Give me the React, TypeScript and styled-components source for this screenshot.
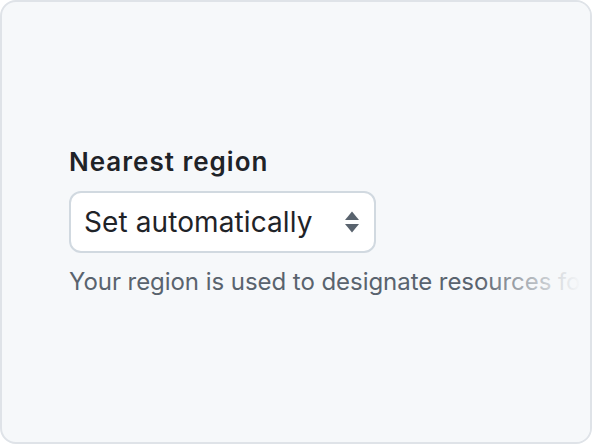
import React from "react";
import styled, { createGlobalStyle } from "styled-components";

const Global = createGlobalStyle`
  html, body { margin: 0; padding: 0; background: #ffffff; }
  * { box-sizing: border-box; }
`;

const Card = styled.div`
  position: relative;
  width: 592px;
  height: 444px;
  border: 2px solid #dfe3e8;
  border-radius: 16px;
  background: #f6f8fa;
  overflow: hidden;
  display: flex;
  flex-direction: column;
  justify-content: center;
  padding: 0 0 0 67px;
  font-family: Inter, "Noto Sans", sans-serif;
`;

const Field = styled.div`
  display: flex;
  flex-direction: column;
  align-items: flex-start;
`;

const Label = styled.div`
  font-size: 26px;
  font-weight: 600;
  color: #1f2328;
  line-height: 32px;
  margin-bottom: 13px;
  letter-spacing: 1px;
`;

const Select = styled.div`
  width: 307px;
  height: 62px;
  background: #ffffff;
  border: 2px solid #d1d9e0;
  border-radius: 12px;
  display: flex;
  align-items: center;
  justify-content: space-between;
  padding: 0 14px 0 13px;
`;

const SelectText = styled.span`
  font-size: 28px;
  color: #1f2328;
  letter-spacing: 0.1px;
`;

const Helper = styled.div`
  margin-top: 13px;
  font-size: 24px;
  line-height: 32px;
  color: #59636e;
  white-space: nowrap;
  letter-spacing: -0.05px;
`;

const Fade = styled.div`
  position: absolute;
  top: 0;
  right: 0;
  bottom: 0;
  width: 110px;
  background: linear-gradient(
    to right,
    rgba(246, 248, 250, 0) 0%,
    rgba(246, 248, 250, 0.45) 35%,
    rgba(246, 248, 250, 0.85) 75%,
    rgba(246, 248, 250, 1) 92%
  );
  pointer-events: none;
`;

const Arrows = () => (
  <svg width="16" height="24" viewBox="0 0 16 24" fill="#59636e">
    <path d="M8 1.5 L15 10 H1 Z" />
    <path d="M1 14 H15 L8 22.5 Z" />
  </svg>
);

export default function App() {
  return (
    <>
      <Global />
      <Card>
        <Field>
          <Label>Nearest region</Label>
          <Select>
            <SelectText>Set automatically</SelectText>
            <Arrows />
          </Select>
          <Helper>Your region is used to designate resources for your account.</Helper>
        </Field>
        <Fade />
      </Card>
    </>
  );
}
